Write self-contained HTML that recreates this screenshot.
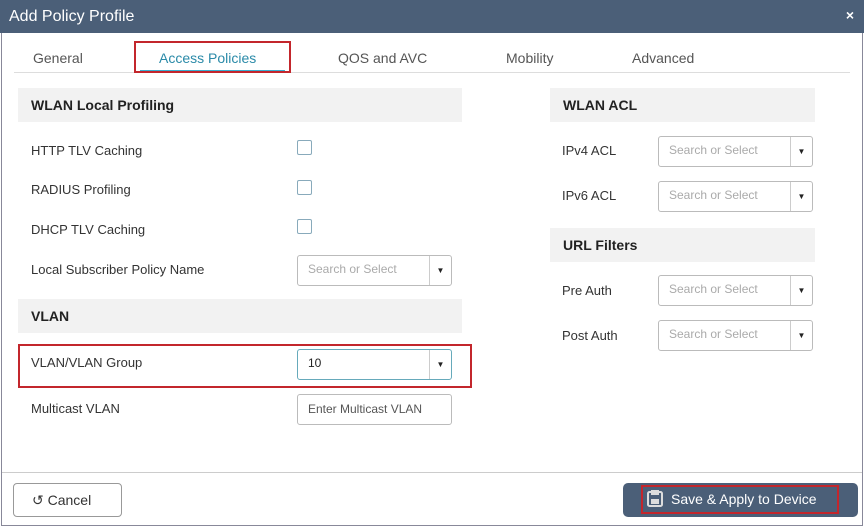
<!DOCTYPE html>
<html><head><style>
*{margin:0;padding:0;box-sizing:border-box}
body{width:864px;height:527px;background:#fff;font-family:"Liberation Sans",sans-serif;position:relative;overflow:hidden;color:#333}
.a{position:absolute}
.title{left:0;top:0;width:864px;height:33px;background:#4b5f78;color:#fff;font-size:16px;line-height:33px;padding-left:9px}
.frame{left:1px;top:33px;width:862px;height:493px;border:1px solid #889;border-top:none}
.tab{top:50px;font-size:14px;color:#555}
.hdr{background:#f2f2f2;font-weight:bold;font-size:14px;padding-left:13px;line-height:34px;color:#222}
.lbl{font-size:13px;color:#333}
.cb{width:15px;height:15px;border:1px solid #8ab;border-radius:2px}
.sel{height:31px;border:1px solid #bbb;border-radius:3px;font-size:12px;color:#aaa;padding:0 10px;line-height:26px;background:#fff}
.sel .dd{position:absolute;right:0;top:0;width:22px;height:29px;border-left:1px solid #ccc;font-size:8px;color:#222;text-align:center;line-height:29px}
.red{border:2px solid #c3262c}
</style></head><body>
<div class="a title">Add Policy Profile</div>
<div class="a" style="right:10px;top:7px;color:#fff;font-size:14px;font-weight:bold">×</div>
<div class="a frame"></div>
<div class="a tab" style="left:33px">General</div>
<div class="a tab" style="left:159px;color:#2a8aa8">Access Policies</div>
<div class="a tab" style="left:338px">QOS and AVC</div>
<div class="a tab" style="left:506px">Mobility</div>
<div class="a tab" style="left:632px">Advanced</div>
<div class="a" style="left:14px;top:72px;width:836px;height:1px;background:#ddd"></div>
<div class="a" style="left:140px;top:70px;width:145px;height:2px;background:#3aaed0"></div>
<div class="a red" style="left:134px;top:41px;width:157px;height:32px"></div>

<div class="a hdr" style="left:18px;top:88px;width:444px;height:34px">WLAN Local Profiling</div>
<div class="a lbl" style="left:31px;top:143px">HTTP TLV Caching</div>
<div class="a lbl" style="left:31px;top:182px">RADIUS Profiling</div>
<div class="a lbl" style="left:31px;top:222px">DHCP TLV Caching</div>
<div class="a lbl" style="left:31px;top:262px">Local Subscriber Policy Name</div>
<div class="a cb" style="left:297px;top:140px"></div>
<div class="a cb" style="left:297px;top:180px"></div>
<div class="a cb" style="left:297px;top:219px"></div>
<div class="a sel" style="left:297px;top:255px;width:155px">Search or Select<div class="dd">▼</div></div>
<div class="a hdr" style="left:18px;top:299px;width:444px;height:34px">VLAN</div>
<div class="a red" style="left:18px;top:344px;width:454px;height:44px"></div>
<div class="a lbl" style="left:31px;top:355px">VLAN/VLAN Group</div>
<div class="a sel" style="left:297px;top:349px;width:155px;color:#222;border-color:#6ab">10<div class="dd">▼</div></div>
<div class="a lbl" style="left:31px;top:401px">Multicast VLAN</div>
<div class="a sel" style="left:297px;top:394px;width:155px;color:#555;line-height:28px">Enter Multicast VLAN</div>

<div class="a hdr" style="left:550px;top:88px;width:265px;height:34px">WLAN ACL</div>
<div class="a lbl" style="left:562px;top:143px">IPv4 ACL</div>
<div class="a lbl" style="left:562px;top:188px">IPv6 ACL</div>
<div class="a sel" style="left:658px;top:136px;width:155px">Search or Select<div class="dd">▼</div></div>
<div class="a sel" style="left:658px;top:181px;width:155px">Search or Select<div class="dd">▼</div></div>
<div class="a hdr" style="left:550px;top:228px;width:265px;height:34px">URL Filters</div>
<div class="a lbl" style="left:562px;top:283px">Pre Auth</div>
<div class="a lbl" style="left:562px;top:328px">Post Auth</div>
<div class="a sel" style="left:658px;top:275px;width:155px">Search or Select<div class="dd">▼</div></div>
<div class="a sel" style="left:658px;top:320px;width:155px">Search or Select<div class="dd">▼</div></div>

<div class="a" style="left:2px;top:472px;width:860px;height:1px;background:#ccc"></div>
<div class="a" style="left:13px;top:483px;width:109px;height:34px;border:1px solid #999;border-radius:4px;font-size:14px;line-height:32px;padding-left:18px;color:#333">↺ Cancel</div>
<div class="a" style="left:623px;top:483px;width:235px;height:34px;background:#4b5f78;border-radius:5px"></div>
<div class="a red" style="left:641px;top:485px;width:198px;height:29px;color:#fff;font-size:14px;line-height:25px;padding-left:28px">Save &amp; Apply to Device</div>
<svg class="a" style="left:647px;top:490px" width="16" height="17" viewBox="0 0 16 17"><rect x="1" y="2" width="14" height="14" rx="1.5" fill="none" stroke="#ddd" stroke-width="2"/><rect x="4" y="0" width="8" height="5" fill="#ddd"/><rect x="4" y="9" width="8" height="5" fill="#ddd"/></svg>
</body></html>
